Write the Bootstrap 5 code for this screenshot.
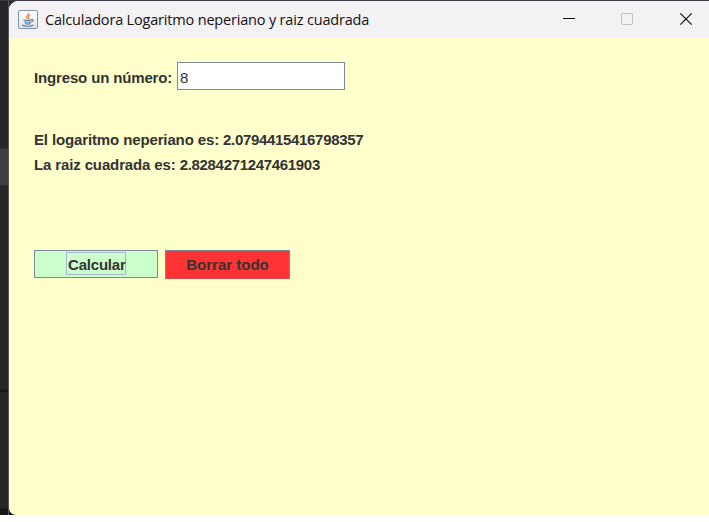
<!DOCTYPE html>
<html lang="es">
<head>
<meta charset="utf-8">
<meta name="viewport" content="width=device-width, initial-scale=1">
<title>Calculadora Logaritmo neperiano y raiz cuadrada</title>
<link href="https://cdn.jsdelivr.net/npm/bootstrap@5.3.0/dist/css/bootstrap.min.css" rel="stylesheet">
<style>
body{background:#fff;font-family:"Liberation Sans",Arial,sans-serif;font-size:15px;line-height:25px;color:#333}
.desktop{height:515px;padding:1px 0 0 9px;background:linear-gradient(#3b3a40,#3b3a40) 0 0/100% 1px no-repeat,linear-gradient(90deg,transparent 8px,#55575a 8px 9px,transparent 9px),linear-gradient(#27272b 0 148px,#3e3e43 149px 185px,#27272a 186px 389px,#19191b 390px 392px,#262629 392px 508px,#171719 509px)}
.frame{height:514px;background:#ffffcc;border-radius:9px 0 0 7px}
.titlebar{height:37px;background:#f4f1f4;padding-left:9px;color:#111;font:14.5px/37px "Open Sans","Segoe UI",sans-serif}
.caption-text{margin-left:7px;white-space:nowrap;letter-spacing:-.18px}
.winbtn{width:58px}
.content{padding:24px 0 0 25px;font-weight:700;letter-spacing:-.13px}
.content label{width:138px;padding-top:2px;letter-spacing:-.15px;white-space:nowrap}
.field{width:168px;height:28px;margin-left:5px;padding:3px 0 0 2px;border:1px solid #7a8a99;border-radius:0;background:#fff;color:#333;font-size:15px;line-height:20px;outline:0}
.results{margin-top:37px}
.digits{letter-spacing:-.32px}
.actions{margin-top:73px;gap:7px}
.btn-swing{width:125px;height:29px;padding:0;border:1px solid #7a8a99;border-radius:0;font-size:15px;font-weight:700;line-height:27px;color:#333}
.calc{width:124px;height:28px;background:#ccffcc;line-height:26px}
.calc span{display:inline-block;width:60px;height:23px;padding-left:1px;border:1px solid #a3b8cc;line-height:24px;margin-top:1px;vertical-align:top;white-space:nowrap;letter-spacing:-.2px}
.erase{background:#ff3333;border-bottom-color:#d84a4a}
</style>
</head>
<body>
<div class="desktop">
<div class="frame overflow-hidden">
<header class="titlebar d-flex align-items-center">
<svg width="20" height="20" viewBox="0 0 20 20">
<defs><linearGradient id="tile" x2="0" y2="1"><stop stop-color="#fff"/><stop offset="1" stop-color="#dce4ec"/></linearGradient></defs>
<rect x=".5" y=".5" width="19" height="18" rx="1.5" fill="url(#tile)" stroke="#8094a8"/>
<path d="M10.8 2.8c.5 2-3 2.700-2.300 4.500.2.700 1 1 1.200 1.700M12.300 5.200c-2.200 1-2.400 1.800-1.500 2.700.4.500.2 1-.3 1.500" fill="none" stroke="#e58b45" stroke-width="1.300"/>
<path d="M5.500 9.700c2 .8 6 .8 8 0M6.500 11.700c2 .7 4.500.7 6.500 0M7 13.500c2 .7 4 .7 5.500 0M13.500 9.600c2.500-.5 2 2-.3 2.400M4 15c2 1.700 9.500 1.500 11.500 0" fill="none" stroke="#557c9f" stroke-width="1.100"/>
</svg>
<span class="caption-text">Calculadora Logaritmo neperiano y raiz cuadrada</span>
<div class="d-flex ms-auto">
<svg class="winbtn" height="37" viewBox="0 0 58 37"><path d="M28 17.500h12" stroke="#111"/></svg>
<svg class="winbtn" height="37" viewBox="0 0 58 37"><rect x="28.500" y="12.500" width="11" height="11" rx="1" fill="none" stroke="#c3c0c3"/></svg>
<svg class="winbtn" height="37" viewBox="0 0 58 37"><path d="M29.300 12.300l11.400 11.400M40.700 12.300l-11.400 11.400" stroke="#111" stroke-width="1.200"/></svg>
</div>
</header>
<main class="content">
<div class="d-flex align-items-center"><label for="num">Ingreso un número:</label><input id="num" class="field" type="text" value="8"></div>
<div class="results"><div>El logaritmo neperiano es: <span class="digits">2.0794415416798357</span></div><div>La raiz cuadrada es: <span class="digits">2.8284271247461903</span></div></div>
<div class="actions d-flex align-items-start"><button class="btn btn-swing calc" type="button"><span>Calcular</span></button><button class="btn btn-swing erase" type="button">Borrar todo</button></div>
</main>
</div>
</div>
<script src="https://cdn.jsdelivr.net/npm/bootstrap@5.3.0/dist/js/bootstrap.bundle.min.js"></script>
</body>
</html>
